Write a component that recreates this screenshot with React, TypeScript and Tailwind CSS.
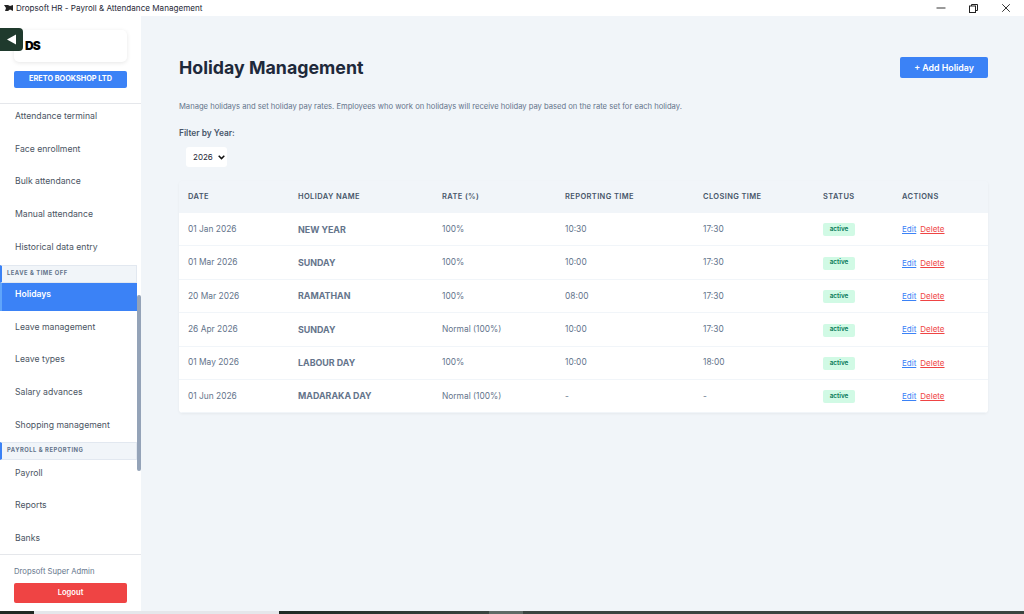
import { Minus, X } from "lucide-react";

const topItems = ["Attendance terminal", "Face enrollment", "Bulk attendance", "Manual attendance", "Historical data entry"];
const leaveItems = ["Holidays", "Leave management", "Leave types", "Salary advances", "Shopping management"];
const payrollItems = ["Payroll", "Reports", "Banks"];

const holidays = [
  { date: "01 Jan 2026", name: "NEW YEAR", rate: "100%", reporting: "10:30", closing: "17:30" },
  { date: "01 Mar 2026", name: "SUNDAY", rate: "100%", reporting: "10:00", closing: "17:30" },
  { date: "20 Mar 2026", name: "RAMATHAN", rate: "100%", reporting: "08:00", closing: "17:30" },
  { date: "26 Apr 2026", name: "SUNDAY", rate: "Normal (100%)", reporting: "10:00", closing: "17:30" },
  { date: "01 May 2026", name: "LABOUR DAY", rate: "100%", reporting: "10:00", closing: "18:00" },
  { date: "01 Jun 2026", name: "MADARAKA DAY", rate: "Normal (100%)", reporting: "-", closing: "-" },
];

const cols = "grid grid-cols-[110px_144px_123px_138px_120px_79px_1fr]";

function NavItem({ label, active }: { label: string; active?: boolean }) {
  if (active) {
    return (
      <div className="h-[28px] pb-[4px] pl-[13px] flex items-center text-[8.600px] font-semibold bg-[#3b82f6] text-white border-l-2 border-[#60a5fa]">
        {label}
      </div>
    );
  }
  return <div className="h-[32.750px] pl-[15px] flex items-center text-[8.660px] text-[#4b5563]">{label}</div>;
}

function SectionLabel({ label }: { label: string }) {
  return (
    <div className="h-[18px] bg-[#f1f5f9] border border-[#e2e8f0] border-l-2 border-l-[#3b82f6] pl-[5px] flex items-center text-[5.800px] font-bold tracking-[0.09em] text-[#64748b]">
      {label}
    </div>
  );
}

export default function App() {
  return (
    <div className="w-[1024px] h-[614px] overflow-hidden flex flex-col bg-[#f1f5f9] font-['Inter',sans-serif]">
      {/* title bar */}
      <div className="h-[16px] bg-white flex items-center shrink-0">
        <svg width="10" height="8" viewBox="0 0 10 8" className="ml-[4px] mr-[2px]">
          <path d="M0 1h4l2 1 3-1v6L6 5.500 4 7H1l1-3z" fill="#222" />
        </svg>
        <span className="text-[8.100px] text-[#1f2937]">Dropsoft HR - Payroll &amp; Attendance Management</span>
        <div className="ml-auto flex items-center">
          <Minus size={14} strokeWidth={1.7} className="text-[#333] mr-[21px]" />
          <svg width="9" height="9" viewBox="0 0 9 9" fill="none" stroke="#222" strokeWidth="1" className="mr-[21px]">
            <rect x="0.500" y="2" width="6" height="6.500" />
            <path d="M2.500 2V0.500h6v6H7" />
          </svg>
          <X size={14} strokeWidth={1.7} className="text-[#333] mr-[11px]" />
        </div>
      </div>

      <div className="flex-1 flex min-h-0">
        {/* sidebar */}
        <aside className="w-[141px] shrink-0 bg-white flex flex-col relative">
          <button className="absolute left-0 top-[12px] w-[23px] h-[23px] bg-[#1f3a2d] rounded-r-[4px] flex items-center justify-center">
            <svg width="11" height="11" viewBox="0 0 11 11"><path d="M10 0.500V10.500L1 5.500z" fill="#fff" /></svg>
          </button>
          <div className="h-[87px] shrink-0 px-[14px] pt-[14px]">
            <div className="h-[32px] rounded-[5px] bg-white shadow-[0_1px_4px_rgba(0,0,0,0.1)] pl-[11px] flex items-center">
              <span className="text-[12px] font-black text-black tracking-[-0.08em]">DS</span>
            </div>
            <div className="mt-[9px] h-[17px] bg-[#3b82f6] rounded-[2px] flex items-center justify-center text-[7.300px] font-bold text-white">
              ERETO BOOKSHOP LTD
            </div>
          </div>
          <div className="flex-1 min-h-0 overflow-hidden flex border-t border-[#e5e7eb]">
            <nav className="w-[137px] shrink-0 -mt-[4px]">
              {topItems.map((t) => <NavItem key={t} label={t} />)}
              <div className="mt-[1px]"><SectionLabel label="LEAVE & TIME OFF" /></div>
              {leaveItems.map((t) => <NavItem key={t} label={t} active={t === "Holidays"} />)}
              <SectionLabel label="PAYROLL & REPORTING" />
              <div className="-mt-[3px]">
                {payrollItems.map((t) => <NavItem key={t} label={t} />)}
              </div>
            </nav>
            <div className="w-[4px] relative">
              <div className="absolute left-0 right-0 top-[191px] h-[176px] bg-[#94a3b8] rounded-[2px]" />
            </div>
          </div>
          <div className="h-[57px] shrink-0 border-t border-[#e5e7eb] px-[14px] pt-[11px]">
            <div className="text-[7.700px] text-[#64748b]">Dropsoft Super Admin</div>
            <div className="mt-[5px] h-[20px] bg-[#ef4444] rounded-[2px] flex items-center justify-center text-[7.600px] font-semibold text-white">Logout</div>
          </div>
        </aside>

        {/* main */}
        <main className="flex-1 pl-[38px] pr-[36px] pt-[41px]">
          <div className="h-[21px] flex items-center justify-between">
            <h1 className="text-[17.800px] leading-[22px] font-bold text-[#1e293b]">Holiday Management</h1>
            <button className="w-[88px] h-[21px] bg-[#3b82f6] rounded-[2px] text-white text-[8.800px] font-semibold">+ Add Holiday</button>
          </div>
          <p className="mt-[23px] text-[7.620px] leading-[12px] text-[#64748b]">
            Manage holidays and set holiday pay rates. Employees who work on holidays will receive holiday pay based on the rate set for each holiday.
          </p>
          <div className="mt-[14px] text-[8.400px] leading-[12px] font-semibold text-[#475569]">Filter by Year:</div>
          <div className="mt-[8px] ml-[7px] w-[41px] h-[20px] bg-white rounded-[3px] flex items-center pl-[7px] text-[8px] text-[#1f2937]">
            2026
            <svg width="7" height="5" viewBox="0 0 7 5" fill="none" stroke="#111" strokeWidth="1.500" className="ml-[5px]"><path d="M0.700 0.800L3.500 3.600 6.300 0.800" /></svg>
          </div>

          <div className="mt-[14px] rounded-[4px] overflow-hidden shadow-[0_1px_3px_rgba(0,0,0,0.05)]">
            <div className={`${cols} h-[32px] items-center pl-[9px] text-[7.500px] font-semibold tracking-[0.05em] text-[#475569] bg-[#f1f5f9]`}>
              <div>DATE</div>
              <div>HOLIDAY NAME</div>
              <div>RATE (%)</div>
              <div>REPORTING TIME</div>
              <div>CLOSING TIME</div>
              <div>STATUS</div>
              <div>ACTIONS</div>
            </div>
            {holidays.map((h) => (
              <div key={h.date} className={`${cols} h-[33.400px] items-center pl-[9px] bg-white border-b border-[#f1f5f9] text-[8.400px] text-[#64748b]`}>
                <div>{h.date}</div>
                <div className="font-bold text-[8.900px]">{h.name}</div>
                <div>{h.rate}</div>
                <div>{h.reporting}</div>
                <div>{h.closing}</div>
                <div>
                  <span className="inline-flex items-center justify-center w-[32px] h-[13px] rounded-[2px] bg-[#d1fae5] text-[#047857] text-[6.400px] font-semibold">active</span>
                </div>
                <div className="text-[8px] flex gap-[4px]">
                  <span className="text-[#3b82f6] underline">Edit</span>
                  <span className="text-[#ef4444] underline">Delete</span>
                </div>
              </div>
            ))}
          </div>
        </main>
      </div>

      {/* taskbar sliver */}
      <div className="h-[3px] shrink-0 flex">
        <div className="w-[34px] bg-[#1f2a24]" />
        <div className="w-[245px] bg-[#e5e7eb]" />
        <div className="w-[210px] bg-gradient-to-r from-[#1f2a24] to-[#3a4540]" />
        <div className="w-[34px] bg-[#5f6b66]" />
        <div className="flex-1 bg-[#3a4540]" />
      </div>
    </div>
  );
}
